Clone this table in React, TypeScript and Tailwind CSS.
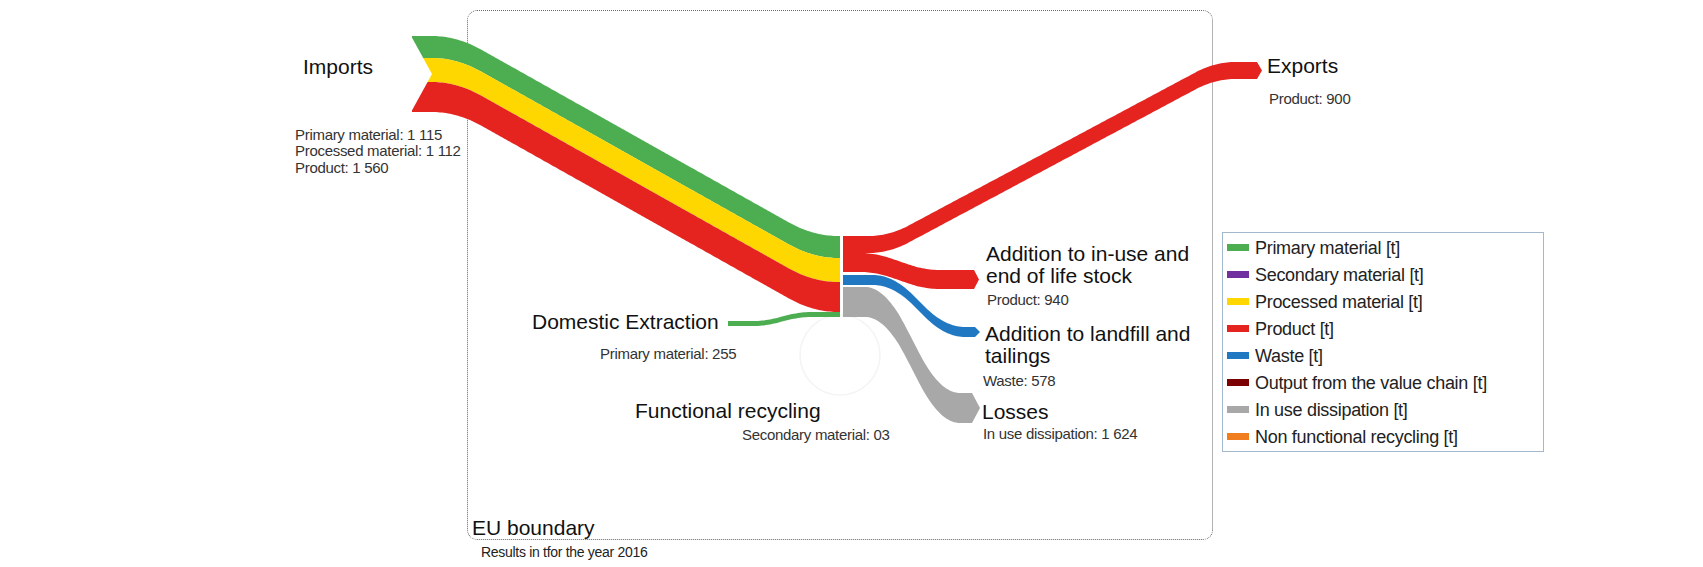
type Pt = [number, number]

// quadratic-smoothed ramp: flat, straight slope, flat (Sankey ribbon shape)
const soft = (u: number, h: number) => (u <= -h ? 0 : u >= h ? u : (u + h) ** 2 / (4 * h))

type Flow = {
  x0: number
  x1: number
  y0: number
  t: number
  d: number
  a: number
  b: number
  h: number
  tip?: number
  color: string
}

function ribbon({ x0, x1, y0, t, d, a, b, h, tip = 0 }: Flow) {
  const n = Math.ceil((x1 - x0) / 2)
  const top: Pt[] = []
  for (let i = 0; i <= n; i++) {
    const x = x0 + ((x1 - x0) * i) / n
    const y = y0 + (d * (soft(x - a, h) - soft(x - b, h))) / (b - a)
    top.push([x, y])
  }
  const end = top[top.length - 1]
  const bottom = top.map(([x, y]) => [x, y + t] as Pt).reverse()
  const pts = [...top, ...(tip ? [[x1 + tip, end[1] + t / 2] as Pt] : []), ...bottom]
  return 'M' + pts.map(([x, y]) => `${x.toFixed(1)},${y.toFixed(1)}`).join('L') + 'Z'
}

const flows: Flow[] = [
  // imports
  { x0: 412, x1: 840, y0: 36, t: 22, d: 200, a: 457, b: 813, h: 25, color: '#4cae50' },
  { x0: 412, x1: 840, y0: 58, t: 24, d: 200, a: 457, b: 813, h: 25, color: '#fed700' },
  { x0: 412, x1: 840, y0: 82, t: 30, d: 200, a: 457, b: 813, h: 25, color: '#e5231f' },
  // domestic extraction
  { x0: 728, x1: 840, y0: 321, t: 5, d: -9, a: 765, b: 800, h: 12, color: '#4cae50' },
  // outflows
  { x0: 843, x1: 1257, y0: 236, t: 17, d: -174, a: 889, b: 1215, h: 20, tip: 5, color: '#e5231f' },
  { x0: 843, x1: 974, y0: 253, t: 19, d: 17, a: 875, b: 925, h: 15, tip: 5, color: '#e5231f' },
  { x0: 843, x1: 975, y0: 275, t: 10, d: 52, a: 893, b: 945, h: 20, tip: 5, color: '#1f78c1' },
  { x0: 843, x1: 972, y0: 287, t: 30, d: 106, a: 885, b: 940, h: 20, tip: 8, color: '#a8a8a8' },
]

const heading = 'text-[21px] fill-[#111]'
const sub = 'text-[15px] tracking-[-0.3px] fill-[#333]'

const legend = [
  { label: 'Primary material [t]', color: 'bg-[#4cae50]' },
  { label: 'Secondary material [t]', color: 'bg-[#7030a0]' },
  { label: 'Processed material [t]', color: 'bg-[#fed700]' },
  { label: 'Product [t]', color: 'bg-[#e5231f]' },
  { label: 'Waste [t]', color: 'bg-[#1f78c1]' },
  { label: 'Output from the value chain [t]', color: 'bg-[#7b0000]' },
  { label: 'In use dissipation [t]', color: 'bg-[#a8a8a8]' },
  { label: 'Non functional recycling [t]', color: 'bg-[#f07d1e]' },
]

export default function App() {
  return (
    <div className="relative w-[1703px] h-[567px] overflow-hidden bg-white font-['Liberation_Sans',Arial,sans-serif]">
      {/* EU boundary */}
      <div className="absolute left-[467px] top-[10px] w-[746px] h-[530px] border border-dotted border-[#666] rounded-[10px]" />

      <svg className="absolute inset-0" width={1703} height={567} viewBox="0 0 1703 567">
        <circle cx={840} cy={355} r={40} fill="none" stroke="#f4f4f4" strokeWidth={1.5} />
        {flows.map((f, i) => (
          <path key={i} d={ribbon(f)} fill={f.color} />
        ))}
        {/* notched tail of the imports arrow */}
        <polygon points="410,34 432,74 410,114" fill="#ffffff" />

        <text x={303} y={74} className={heading}>Imports</text>
        <text x={295} y={139.5} className={sub}>Primary material: 1 115</text>
        <text x={295} y={156} className={sub}>Processed material: 1 112</text>
        <text x={295} y={172.5} className={sub}>Product: 1 560</text>

        <text x={1267} y={73} className={heading}>Exports</text>
        <text x={1269} y={104} className={sub}>Product: 900</text>

        <text x={986} y={261} className={heading}>Addition to in-use and</text>
        <text x={986} y={283} className={heading}>end of life stock</text>
        <text x={987} y={305} className={sub}>Product: 940</text>

        <text x={985} y={341} className={heading}>Addition to landfill and</text>
        <text x={985} y={363} className={heading}>tailings</text>
        <text x={983} y={386} className={sub}>Waste: 578</text>

        <text x={982} y={419} className={heading}>Losses</text>
        <text x={983} y={439} className={sub}>In use dissipation: 1 624</text>

        <text x={532} y={329} className={heading}>Domestic Extraction</text>
        <text x={600} y={359} className={sub}>Primary material: 255</text>

        <text x={635} y={418} className={heading}>Functional recycling</text>
        <text x={742} y={440} className={sub}>Secondary material: 03</text>

        <text x={472} y={535} className={heading}>EU boundary</text>
        <text x={481} y={557} className="text-[14px] tracking-[-0.3px] fill-[#222]">
          Results in tfor the year 2016
        </text>
      </svg>

      {/* legend */}
      <div className="absolute left-[1222px] top-[232px] w-[322px] border border-[#a3b8cc] py-px flex flex-col">
        {legend.map((item) => (
          <div key={item.label} className="h-[27px] flex items-center gap-[6px] pl-[4px]">
            <span className={`w-[22px] h-[7px] ${item.color}`} />
            <span className="text-[18px] tracking-[-0.3px] text-[#222] leading-none">{item.label}</span>
          </div>
        ))}
      </div>
    </div>
  )
}
